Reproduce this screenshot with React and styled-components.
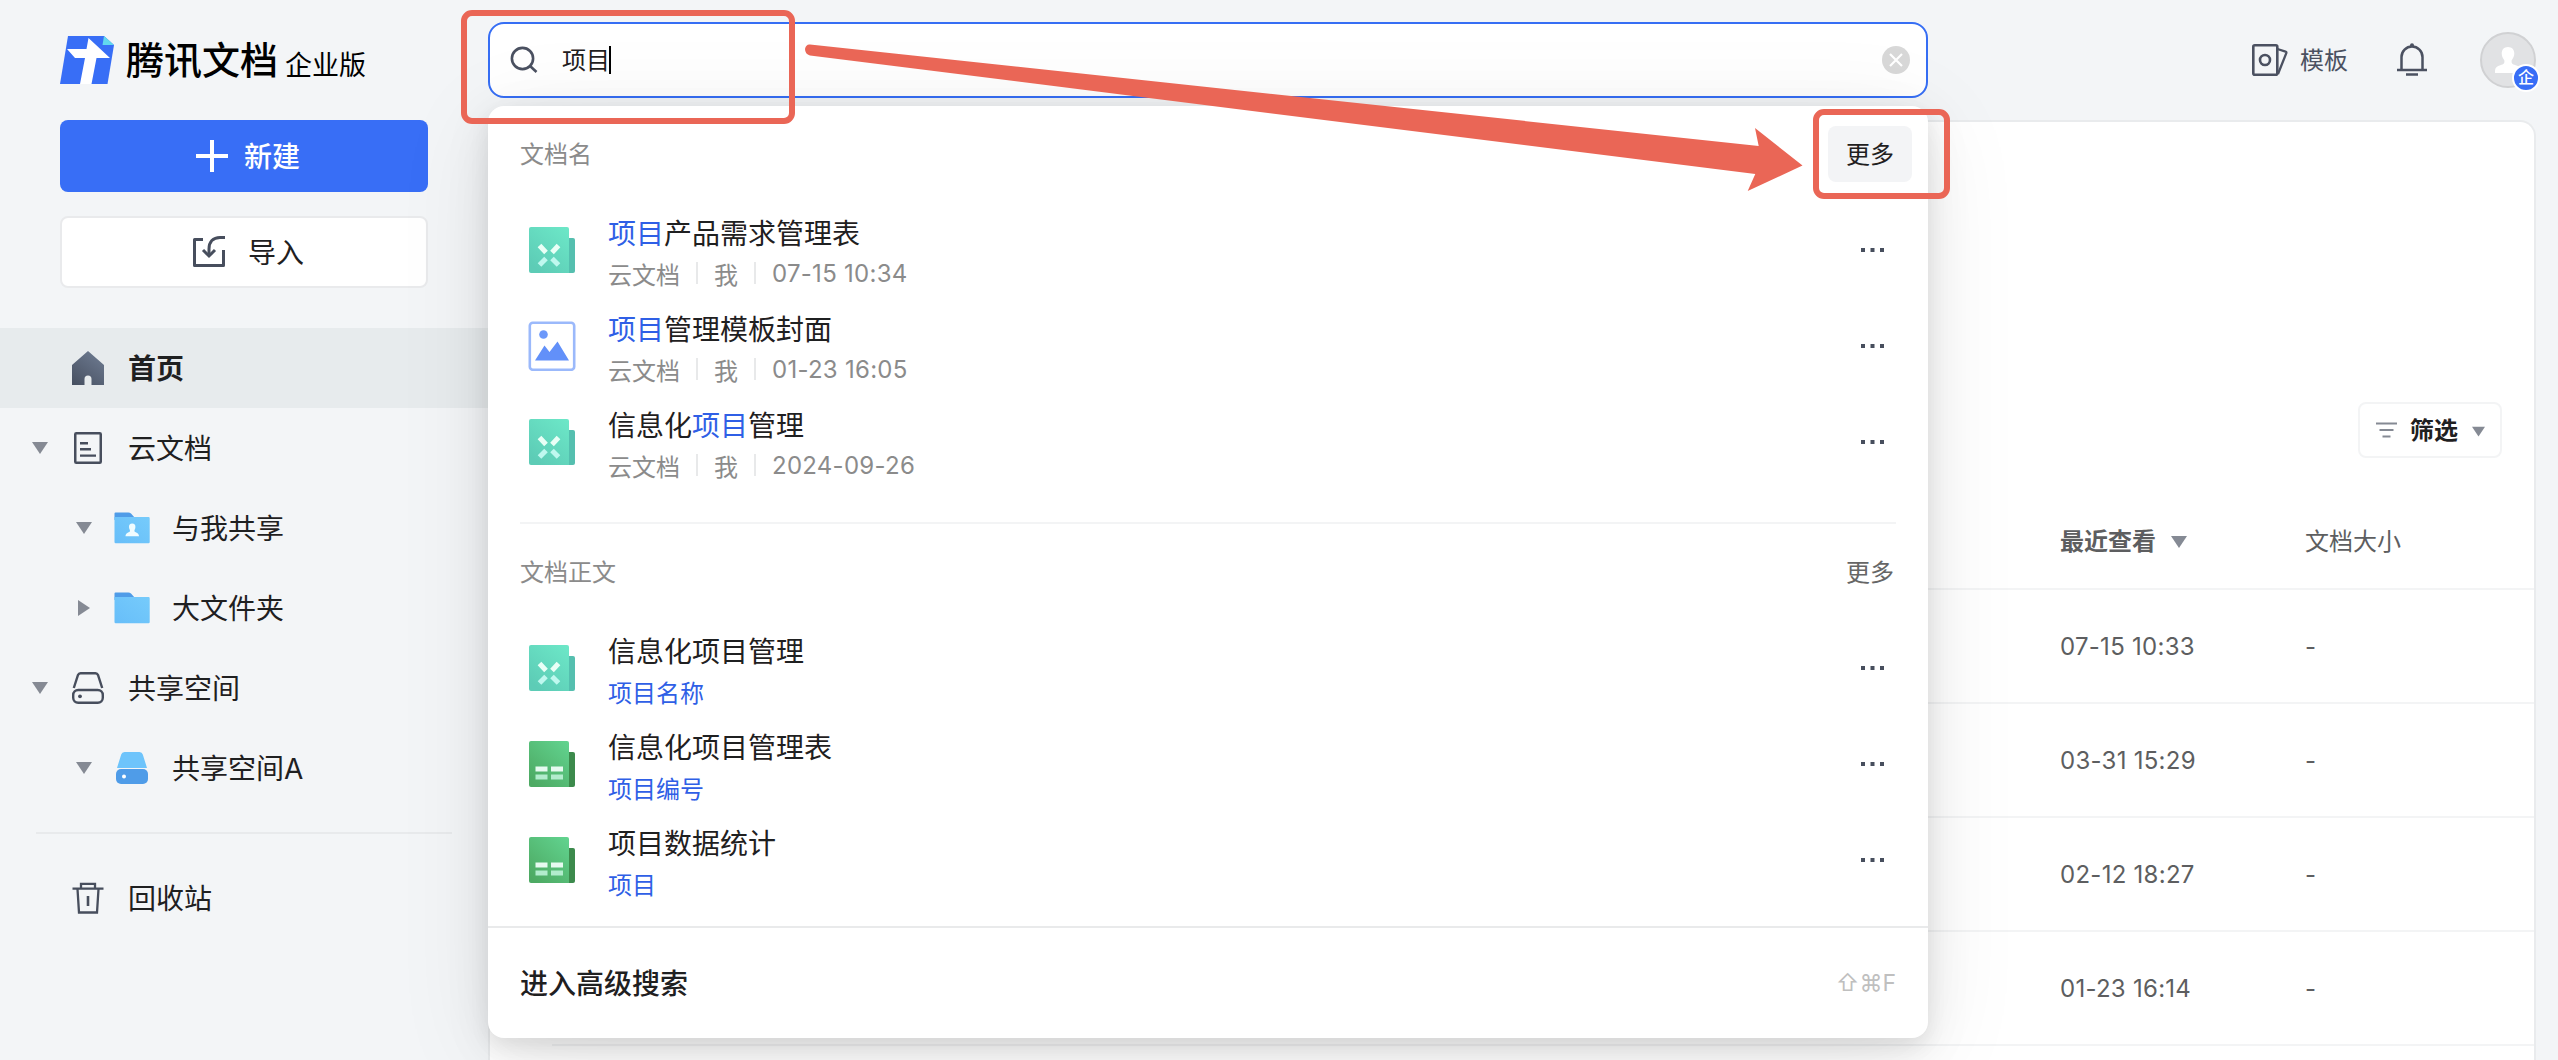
import React, { useState } from 'react'
import styled, { createGlobalStyle, css } from 'styled-components'


const GlobalStyle = createGlobalStyle`
    * {
        box-sizing: border-box;
    }

    body {
        margin: 0;
        background-color: #f3f5f7;
        color: #1f2021;
        font-family: Inter, "Noto Sans CJK SC", sans-serif;
        font-size: 24px;
        overflow: hidden;
    }
`;

const Page = styled.div`
    position: relative;
    display: flex;
    height: 1060px;
    overflow: hidden;
`;

/* ---------- sidebar ---------- */

const Sidebar = styled.aside`
    width: 488px;
    flex-shrink: 0;
    display: flex;
    flex-direction: column;
`;

const Brand = styled.div`
    display: flex;
    align-items: center;
    height: 120px;
    padding-left: 60px;
    color: #000;
`;

const BrandName = styled.span`
    margin-left: 11px;
    font-size: 38px;
    font-weight: 500;
    line-height: 48px;
`;

const BrandEdition = styled.span`
    margin: 11px 0 0 7px;
    font-size: 27px;
    line-height: 36px;
`;

const Actions = styled.div`
    display: flex;
    flex-direction: column;
    gap: 24px;
    padding: 0 60px 40px;
`;

const ActionButton = styled.button`
    display: flex;
    align-items: center;
    justify-content: center;
    gap: ${({ $primary }) => ($primary ? 16 : 23)}px;
    height: 72px;
    padding: 0 0 0 ${({ $primary }) => ($primary ? 8 : 9)}px;
    border: ${({ $primary }) => ($primary ? '0' : '2px solid #e9eaec')};
    border-radius: 8px;
    background-color: ${({ $primary }) => ($primary ? '#386ef6' : '#fff')};
    color: ${({ $primary }) => ($primary ? '#fff' : '#1f2021')};
    font-family: inherit;
    font-size: 28px;
    font-weight: ${({ $primary }) => ($primary ? 500 : 400)};
`;

const NavItem = styled.div`
    display: flex;
    align-items: center;
    height: 80px;
    padding-left: ${({ $level }) => ($level ? 76 : 32)}px;
    background-color: ${({ $active }) => ($active ? '#e7ebed' : 'transparent')};
    font-size: 28px;
    font-weight: ${({ $active }) => ($active ? 600 : 400)};
`;

const NavCaret = styled.span`
    display: flex;
    width: 16px;
    margin-right: 20px;
`;

const NavIcon = styled.span`
    display: flex;
    width: 40px;
    margin-right: 20px;
    justify-content: center;
`;

const NavDivider = styled.div`
    height: 2px;
    margin: 24px 36px;
    background-color: #e8eaec;
`;

/* chinese glyphs sit low in their line box, this lifts them to the optical centre */
const Label = styled.span`
    padding-bottom: 3px;
`;

/* ---------- main area ---------- */

const Main = styled.main`
    flex: 1;
    display: flex;
    flex-direction: column;
    padding-right: 22px;
`;

const TopBar = styled.header`
    display: flex;
    align-items: flex-start;
    justify-content: space-between;
    height: 120px;
    padding-top: 22px;
`;

const SearchWrap = styled.div`
    position: relative;
    width: 1440px;
    z-index: 2;
`;

const SearchBox = styled.div`
    display: flex;
    align-items: center;
    height: 76px;
    padding: 0 16px 0 20px;
    border: 2px solid #366ef4;
    border-radius: 16px;
    background-color: #fff;
`;

const SearchText = styled.span`
    margin-left: 24px;
    padding-top: 2px;
    line-height: 28px;
`;

const Cursor = styled.span`
    width: 2px;
    height: 28px;
    margin-left: -1px;
    background-color: #000;
`;

const ClearButton = styled.span`
    display: flex;
    margin-left: auto;
`;

const UserTools = styled.div`
    display: flex;
    align-items: center;
    height: 76px;
    color: #4b5161;
`;

const TemplateLink = styled.span`
    margin: 0 49px 0 11px;
    padding-bottom: 3px;
`;

const Avatar = styled.div`
    position: relative;
    display: flex;
    align-items: center;
    justify-content: center;
    width: 56px;
    height: 56px;
    margin-left: 53px;
    border: 2px solid #d0d1d3;
    border-radius: 50%;
    background-color: #e1e2e4;
`;

const AvatarBadge = styled.span`
    position: absolute;
    right: -6px;
    bottom: -6px;
    width: 28px;
    height: 28px;
    border: 2px solid #fff;
    border-radius: 50%;
    background-color: #386ef6;
    color: #fff;
    font-size: 16px;
    font-weight: 500;
    line-height: 23px;
    text-align: center;
`;

const Panel = styled.section`
    flex: 1;
    border: 2px solid #e9ebed;
    border-bottom: 0;
    border-radius: 16px 16px 0 0;
    background-color: #fff;
    padding-left: 62px;
`;

const PanelToolbar = styled.div`
    display: flex;
    justify-content: flex-end;
    padding: 280px 32px 36px 0;
`;

const FilterButton = styled.div`
    display: flex;
    align-items: center;
    width: 144px;
    height: 56px;
    padding-left: 16px;
    border: 2px solid #f3f4f5;
    border-radius: 8px;
    font-weight: 600;
`;

const FilterLabel = styled.span`
    margin: 0 14px 0 13px;
    padding-bottom: 3px;
`;

const SortCaret = styled.span`
    display: flex;
    padding-top: 2px;
`;

const TableRow = styled.div`
    display: grid;
    grid-template-columns: 1508px 245px 1fr;
    align-items: center;
    height: ${({ $head }) => ($head ? 96 : 114)}px;
    border-bottom: 2px solid #f3f4f5;
    color: #5d5e60;
    letter-spacing: ${({ $head }) => ($head ? 0 : 0.27)}px;
`;

const SortCell = styled.span`
    grid-column: 2;
    display: flex;
    align-items: center;
    gap: 15px;
    font-weight: 600;
`;

const Cell = styled.span`
    grid-column: ${({ $col }) => $col};
    padding-bottom: ${({ $head }) => ($head ? 3 : 0)}px;
`;

/* ---------- search dropdown ---------- */

const Dropdown = styled.div`
    position: absolute;
    top: 84px;
    left: 0;
    width: 1440px;
    height: 932px;
    border-radius: 16px;
    background-color: #fff;
    box-shadow: 0 8px 20px rgba(0, 0, 0, 0.07), 0 12px 48px rgba(0, 0, 0, 0.08), 0 16px 100px rgba(0, 0, 0, 0.08);
`;

const Group = styled.div`
    margin: 0 32px;
    padding-bottom: ${({ $last }) => ($last ? 18 : 32)}px;
    border-bottom: ${({ $last }) => ($last ? '0' : '2px solid #f3f4f5')};
`;

const GroupHead = styled.div`
    display: flex;
    align-items: center;
    justify-content: space-between;
    height: 96px;
    color: #8b8b8b;
`;

const MoreButton = styled.span`
    display: flex;
    align-items: center;
    height: 56px;
    padding: 0 ${({ $hover }) => ($hover ? 18 : 2)}px;
    margin-right: ${({ $hover }) => ($hover ? -16 : 0)}px;
    border-radius: 8px;
    color: #666;
    ${({ $hover }) => $hover && css`
        background-color: #f3f4f6;
        color: #1f2021;
    `}
`;

const Result = styled.div`
    display: flex;
    align-items: center;
    height: 96px;
    padding: 0 10px 0 8px;
`;

const ResultBody = styled.div`
    flex: 1;
    margin-left: 32px;
    padding-top: 8px;
`;

const ResultTitle = styled.div`
    font-size: 28px;
    line-height: 38px;
`;

const ResultMeta = styled.div`
    display: flex;
    align-items: center;
    gap: 16px;
    height: 40px;
    color: ${({ $matched }) => ($matched ? '#2f5fe6' : '#8b8b8b')};
`;

const MetaLine = styled.span`
    width: 2px;
    height: 22px;
    background-color: #e8e9ea;
`;

const MetaText = styled.span`
    letter-spacing: ${({ $date }) => ($date ? 0.27 : 0)}px;
`;

const Mark = styled.span`
    color: #2f5fe6;
`;

const DropdownFoot = styled.div`
    display: flex;
    align-items: center;
    justify-content: space-between;
    height: 112px;
    padding: 0 32px;
    border-top: 2px solid #e9eaeb;
    font-size: 28px;
    font-weight: 500;
`;

const Shortcut = styled.span`
    color: #bfbfbf;
    font-size: 23px;
    font-weight: 400;
`;

/* hand drawn hints lie over everything else */
const Hints = styled.svg`
    position: absolute;
    left: 0;
    top: 0;
    z-index: 5;
    pointer-events: none;
`;


const Caret = ({ size = 16, right }) => (
    <svg width={size} height={size} viewBox="0 0 16 16" fill="#858a94">
        {right ? <path d="M2 0 L14 8 L2 16 Z" /> : <path d="M0 2 H16 L8 14 Z" />}
    </svg>
)

const Logo = () => (
    <svg width="55" height="48" viewBox="0 0 55 48">
        <path d="M8 0 H44 L54 9 L47.500 48 H0 Z" fill="#386ef6" />
        <path d="M44 0 L54 9 H42.500 Z" fill="#62d8ee" />
        <path d="M28.500 2 L50 22 H36.500 L31.500 48 H20 L25 22 H15 L7 13 H26.500 Z" fill="#fff" />
    </svg>
)

const ImportIcon = () => (
    <svg width="32" height="32" viewBox="0 0 32 32" fill="none" stroke="#474e5d" strokeWidth="3">
        <path d="M10 3.500 H1.500 V29.500 H30.500 V14" strokeLinejoin="round" />
        <path d="M32 1.500 H27 C20 1.500 16 6 16 13 V19" />
        <path d="M10 14 L16 20 L22 14" />
    </svg>
)

const HomeIcon = () => (
    <svg width="32" height="34" viewBox="0 0 32 34">
        <defs>
            <linearGradient id="home" x1="0.8" y1="0" x2="0.1" y2="1">
                <stop offset="0" stopColor="#6d7a90" />
                <stop offset="1" stopColor="#485162" />
            </linearGradient>
        </defs>
        <path d="M16 0 L32 14 V34 H19.500 V28 a3.500 3.500 0 0 0 -7 0 V34 H0 V14 Z" fill="url(#home)" />
    </svg>
)

const DocIcon = () => (
    <svg width="28" height="32" viewBox="0 0 28 32" fill="none" stroke="#474e5d">
        <rect x="1.250" y="1.250" width="25.500" height="29.500" rx="1" strokeWidth="2.500" />
        <path d="M6 11.200 H14 M6 17.200 H17 M6 23.600 H22" strokeWidth="2.400" />
    </svg>
)

const FolderIcon = ({ shared }) => (
    <svg width="36" height="32" viewBox="0 0 36 32">
        <defs>
            <linearGradient id="folder" x1="1" y1="0" x2="0" y2="1">
                <stop offset="0" stopColor="#76cbfb" />
                <stop offset="1" stopColor="#67bef9" />
            </linearGradient>
        </defs>
        <path d="M0.500 8 V1.500 a1 1 0 0 1 1 -1 H14 a4 4 0 0 1 3 1 L21 6 V8 Z" fill="#4f9ce8" />
        <path d="M0.500 5 H34.500 a1.200 1.200 0 0 1 1.200 1.200 V30 a1.200 1.200 0 0 1 -1.200 1.200 H1.700 a1.200 1.200 0 0 1 -1.200 -1.200 Z" fill="url(#folder)" />
        {shared && <path d="M18.200 11.500 a3.300 3.300 0 0 1 3.200 3.500 c0 2 -1 2.500 -1 4 c0 1.500 4.600 1.300 4.600 5.200 H11.500 c0 -3.900 4.500 -3.700 4.500 -5.200 c0 -1.500 -1 -2 -1 -4 a3.300 3.300 0 0 1 3.200 -3.500 Z" fill="#f0fcff" />}
    </svg>
)

const DriveIcon = () => (
    <svg width="32" height="32" viewBox="0 0 32 32" fill="none" stroke="#474e5d" strokeWidth="2.400">
        <path d="M1.800 16 L6 3 a3 3 0 0 1 2.600 -1.800 H23.400 A3 3 0 0 1 26 3 L30.200 16" />
        <rect x="1.200" y="18" width="29.600" height="12.800" rx="5" />
        <circle cx="8" cy="24.300" r="1.900" fill="#474e5d" stroke="none" />
    </svg>
)

const DriveFillIcon = () => (
    <svg width="32" height="32" viewBox="0 0 32 32">
        <path d="M1 16 L5.200 2.500 a3.500 3.500 0 0 1 3.300 -2.500 H23.500 a3.500 3.500 0 0 1 3.300 2.500 L31 16 Z" fill="#6ec4fb" />
        <rect x="0" y="17" width="32" height="15" rx="5" fill="#4f9ce8" />
        <circle cx="8" cy="24.500" r="2" fill="#fff" />
    </svg>
)

const TrashIcon = () => (
    <svg width="32" height="32" viewBox="0 0 32 32" fill="none" stroke="#474e5d" strokeWidth="2.300">
        <path d="M0.500 6.700 H31.500 M9 6 V1.800 H23 V6" />
        <path d="M5.500 7 L7 30.500 H25 L26.500 7" />
        <path d="M16 14 V24" strokeWidth="2.600" />
    </svg>
)

const SmartSheetIcon = () => (
    <svg width="48" height="48" viewBox="0 0 48 48">
        <defs>
            <linearGradient id="smart" x1="1" y1="0" x2="0.300" y2="1">
                <stop offset="0" stopColor="#6de8c8" />
                <stop offset="1" stopColor="#5dccb6" />
            </linearGradient>
        </defs>
        <path d="M38 12 H45 a2 2 0 0 1 2 2 V45 a2 2 0 0 1 -2 2 H38 Z" fill="#55bfaf" />
        <path d="M3 1 H39 a2 2 0 0 1 2 2 V47 H3 a2 2 0 0 1 -2 -2 V3 a2 2 0 0 1 2 -2 Z" fill="url(#smart)" />
        <path d="M11.500 19.500 L18 26.500 M30.500 19.500 L24 26.500" stroke="#e9fff6" strokeWidth="5" />
        <path d="M11.500 39 L18 32.500 M30.500 39 L24 32.500" stroke="#bff8ef" strokeWidth="5" />
    </svg>
)

const SheetIcon = () => (
    <svg width="48" height="48" viewBox="0 0 48 48">
        <defs>
            <linearGradient id="sheet" x1="1" y1="0" x2="0.200" y2="1">
                <stop offset="0" stopColor="#62d490" />
                <stop offset="1" stopColor="#4daa63" />
            </linearGradient>
        </defs>
        <path d="M38 12 H45 a2 2 0 0 1 2 2 V45 a2 2 0 0 1 -2 2 H38 Z" fill="#3c8a4c" />
        <path d="M3 1 H39 a2 2 0 0 1 2 2 V47 H3 a2 2 0 0 1 -2 -2 V3 a2 2 0 0 1 2 -2 Z" fill="url(#sheet)" />
        <path d="M7.500 29 H19.500 M23 29 H35" stroke="#e6faf0" strokeWidth="5" />
        <path d="M7.500 37 H19.500 M23 37 H35" stroke="#b2eccd" strokeWidth="5" />
    </svg>
)

const ImageIcon = () => (
    <svg width="48" height="50" viewBox="0 0 48 50">
        <rect x="1.800" y="1.800" width="44.400" height="47" rx="3" fill="#fff" stroke="#9bb9fb" strokeWidth="2.600" />
        <circle cx="15.500" cy="13.500" r="4.300" fill="#6c98fa" />
        <path d="M7 39.500 L16.500 24.500 L21.500 31 L29.500 20.500 L41 39.500 Z" fill="#6290f9" />
    </svg>
)

const DotsIcon = () => (
    <svg width="26" height="6" viewBox="0 0 26 6" fill="#474e5d">
        <rect x="1" y="1" width="4" height="4" />
        <rect x="10.500" y="1" width="4" height="4" />
        <rect x="20" y="1" width="4" height="4" />
    </svg>
)

const SearchIcon = () => (
    <svg width="28" height="28" viewBox="0 0 28 28" fill="none" stroke="#4b5161" strokeWidth="2.600">
        <circle cx="12.500" cy="12.500" r="10.600" />
        <path d="M19.500 19.500 L26.500 26" />
    </svg>
)

const ClearIcon = () => (
    <svg width="28" height="28" viewBox="0 0 28 28">
        <circle cx="14" cy="14" r="14" fill="#d8d8d8" />
        <path d="M8 8 L20 20 M20 8 L8 20" stroke="#fff" strokeWidth="2.200" />
    </svg>
)

const TemplateIcon = () => (
    <svg width="37" height="32" viewBox="0 0 37 32" fill="none" stroke="#4b5161" strokeWidth="2.600">
        <rect x="1.300" y="1.300" width="24" height="29.400" rx="1.500" />
        <circle cx="13" cy="16" r="5" />
        <path d="M25.500 5 L33.500 7.600 a1.300 1.300 0 0 1 0.800 1.600 L26 30" strokeWidth="2.300" />
    </svg>
)

const BellIcon = () => (
    <svg width="30" height="34" viewBox="0 0 30 34" fill="none" stroke="#4b5161" strokeWidth="2.500">
        <path d="M4.500 27 V14 a10.500 10.500 0 0 1 21 0 V27" />
        <path d="M0 27 H30 M9 31.500 H21" />
        <circle cx="15" cy="2.300" r="2" fill="#4b5161" stroke="none" />
    </svg>
)

const PersonIcon = () => (
    <svg width="28" height="28" viewBox="0 0 28 28" fill="#fff">
        <path d="M14 1 c4 0 6.300 2.800 6.300 6.600 c0 3 -1.300 4.800 -2.600 6.600 c-0.500 3 0.300 3.800 4 5 c3.300 1 5 2.600 5 5.600 V27 H1 V24.800 c0 -3 2 -4.600 5.300 -5.600 c3.700 -1.200 4.500 -2 4 -5 c-1.300 -1.800 -2.600 -3.600 -2.600 -6.600 C7.700 3.800 10 1 14 1 Z" />
    </svg>
)

const FilterIcon = () => (
    <svg width="21" height="18" viewBox="0 0 21 18" stroke="#858a94" strokeWidth="2.200">
        <path d="M0 2.500 H21 M3.500 9 H17.500 M6.500 15.500 H14.500" />
    </svg>
)


const icons = { smart: SmartSheetIcon, sheet: SheetIcon, image: ImageIcon }

const nav = [
    { label: '首页', icon: <HomeIcon />, active: true },
    { label: '云文档', icon: <DocIcon />, caret: 'down' },
    { label: '与我共享', icon: <FolderIcon shared />, caret: 'down', level: 1 },
    { label: '大文件夹', icon: <FolderIcon />, caret: 'right', level: 1 },
    { label: '共享空间', icon: <DriveIcon />, caret: 'down' },
    { label: '共享空间A', icon: <DriveFillIcon />, caret: 'down', level: 1 },
]

const byName = [
    { icon: 'smart', title: '项目产品需求管理表', meta: ['云文档', '我', '07-15 10:34'] },
    { icon: 'image', title: '项目管理模板封面', meta: ['云文档', '我', '01-23 16:05'] },
    { icon: 'smart', title: '信息化项目管理', meta: ['云文档', '我', '2024-09-26'] },
]

const byContent = [
    { icon: 'smart', title: '信息化项目管理', match: '项目名称' },
    { icon: 'sheet', title: '信息化项目管理表', match: '项目编号' },
    { icon: 'sheet', title: '项目数据统计', match: '项目' },
]

const files = ['07-15 10:33', '03-31 15:29', '02-12 18:27', '01-23 16:14']


function NavRow({ item }) {
    return (
        <NavItem $active={item.active} $level={item.level}>
            <NavCaret>{item.caret && <Caret right={item.caret === 'right'} />}</NavCaret>
            <NavIcon>{item.icon}</NavIcon>
            <Label>{item.label}</Label>
        </NavItem>
    )
}

function Highlight({ text, keyword }) {
    const parts = text.split(keyword)
    return parts.map((part, i) => (
        <React.Fragment key={i}>
            {i > 0 && <Mark>{keyword}</Mark>}
            {part}
        </React.Fragment>
    ))
}

function ResultRow({ item, keyword }) {
    const Icon = icons[item.icon]
    return (
        <Result>
            <Icon />
            <ResultBody>
                <ResultTitle>
                    {item.meta ? <Highlight text={item.title} keyword={keyword} /> : item.title}
                </ResultTitle>
                <ResultMeta $matched={!!item.match}>
                    {item.match}
                    {item.meta && item.meta.map((m, i) => (
                        <React.Fragment key={m}>
                            {i > 0 && <MetaLine />}
                            <MetaText $date={i === 2}>{m}</MetaText>
                        </React.Fragment>
                    ))}
                </ResultMeta>
            </ResultBody>
            <DotsIcon />
        </Result>
    )
}

function App() {

    const [keyword] = useState('项目')

    return (
        <Page>
            <GlobalStyle />
            <Sidebar>
                <Brand>
                    <Logo />
                    <BrandName>腾讯文档</BrandName>
                    <BrandEdition>企业版</BrandEdition>
                </Brand>
                <Actions>
                    <ActionButton $primary>
                        <svg width="32" height="32" viewBox="0 0 32 32" stroke="#fff" strokeWidth="4">
                            <path d="M16 0 V32 M0 16 H32" />
                        </svg>
                        <Label>新建</Label>
                    </ActionButton>
                    <ActionButton>
                        <ImportIcon />
                        <Label>导入</Label>
                    </ActionButton>
                </Actions>
                {nav.map((item) => <NavRow key={item.label} item={item} />)}
                <NavDivider />
                <NavRow item={{ label: '回收站', icon: <TrashIcon /> }} />
            </Sidebar>

            <Main>
                <TopBar>
                    <SearchWrap>
                        <SearchBox>
                            <SearchIcon />
                            <SearchText>{keyword}</SearchText>
                            <Cursor />
                            <ClearButton><ClearIcon /></ClearButton>
                        </SearchBox>
                        <Dropdown>
                            <Group>
                                <GroupHead>
                                    <Label>文档名</Label>
                                    <MoreButton $hover><Label>更多</Label></MoreButton>
                                </GroupHead>
                                {byName.map((item) => <ResultRow key={item.title} item={item} keyword={keyword} />)}
                            </Group>
                            <Group $last>
                                <GroupHead>
                                    <Label>文档正文</Label>
                                    <MoreButton><Label>更多</Label></MoreButton>
                                </GroupHead>
                                {byContent.map((item) => <ResultRow key={item.title} item={item} keyword={keyword} />)}
                            </Group>
                            <DropdownFoot>
                                <Label>进入高级搜索</Label>
                                <Shortcut>⇧⌘F</Shortcut>
                            </DropdownFoot>
                        </Dropdown>
                    </SearchWrap>
                    <UserTools>
                        <TemplateIcon />
                        <TemplateLink>模板</TemplateLink>
                        <BellIcon />
                        <Avatar>
                            <PersonIcon />
                            <AvatarBadge>企</AvatarBadge>
                        </Avatar>
                    </UserTools>
                </TopBar>

                <Panel>
                    <PanelToolbar>
                        <FilterButton>
                            <FilterIcon />
                            <FilterLabel>筛选</FilterLabel>
                            <SortCaret><Caret size={13} /></SortCaret>
                        </FilterButton>
                    </PanelToolbar>
                    <TableRow $head>
                        <SortCell>
                            <Label>最近查看</Label>
                            <SortCaret><Caret /></SortCaret>
                        </SortCell>
                        <Cell $col={3} $head>文档大小</Cell>
                    </TableRow>
                    {files.map((time) => (
                        <TableRow key={time}>
                            <Cell $col={2}>{time}</Cell>
                            <Cell $col={3}>-</Cell>
                        </TableRow>
                    ))}
                </Panel>
            </Main>

            <Hints width="2558" height="1060" viewBox="0 0 2558 1060">
                <rect x="464" y="13" width="328" height="108" rx="8" fill="none" stroke="#ea6656" strokeWidth="6" />
                <rect x="1816" y="112" width="131" height="84" rx="8" fill="none" stroke="#ea6656" strokeWidth="6" />
                <path d="M810 44.500 L1758.700 146 L1755 128 L1802.500 165.500 L1747.700 191 L1755.300 174 L810 55.500 Q805 54 805 49 Q806 44 810 44.500 Z" fill="#ea6656" />
            </Hints>
        </Page>
    )
}

export default App
